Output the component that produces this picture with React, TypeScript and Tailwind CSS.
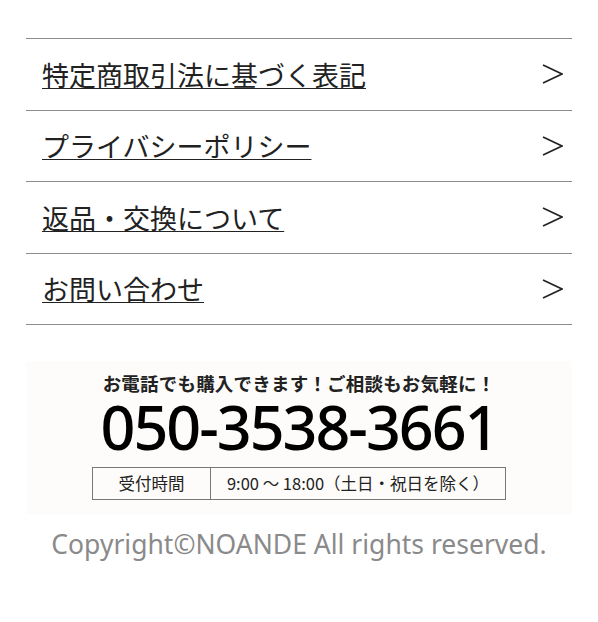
const links = [
  "特定商取引法に基づく表記",
  "プライバシーポリシー",
  "返品・交換について",
  "お問い合わせ",
];

function Chevron() {
  return (
    <svg width="22" height="22" viewBox="0 0 22 22" className="shrink-0">
      <polyline points="2,2 21,11 2,20" fill="none" stroke="#222" strokeWidth="1.6" />
    </svg>
  );
}

export default function App() {
  return (
    <div className="min-h-[622px] w-[598px] bg-white px-[26px] pt-[38px] font-['Noto_Sans_CJK_JP',sans-serif] text-[#222]">
      <ul className="border-t border-[#8c8c8c]">
        {links.map((label) => (
          <li key={label} className="border-b border-[#8c8c8c]">
            <a href="#" className="flex h-[70.5px] items-center justify-between pl-[16px] pr-[9px]">
              <span className="text-[27px] leading-none underline decoration-1 underline-offset-[2px]">{label}</span>
              <Chevron />
            </a>
          </li>
        ))}
      </ul>

      <div className="mt-[36px] flex h-[153px] flex-col items-center bg-[#fdfcfa] pt-[9px]">
        <p className="text-[18.5px] font-bold leading-[26px] tracking-[0.2px]">
          お電話でも購入できます！ご相談もお気軽に！
        </p>
        <p className="font-['Noto_Sans',sans-serif] text-[61px] font-medium leading-[62px] tracking-[-2px] text-black">
          050-3538-3661
        </p>
        <div className="mt-[9px] flex h-[33px] w-[414px] border border-[#777] text-[16.5px]">
          <div className="flex w-[118px] items-center justify-center border-r border-[#777]">受付時間</div>
          <div className="flex flex-1 items-center justify-center">9:00 〜 18:00（土日・祝日を除く）</div>
        </div>
      </div>

      <p className="mt-[12px] text-center font-['Noto_Sans',sans-serif] text-[26.5px] leading-[36px] text-[#8a8a8a]">
        Copyright©NOANDE All rights reserved.
      </p>
    </div>
  );
}
